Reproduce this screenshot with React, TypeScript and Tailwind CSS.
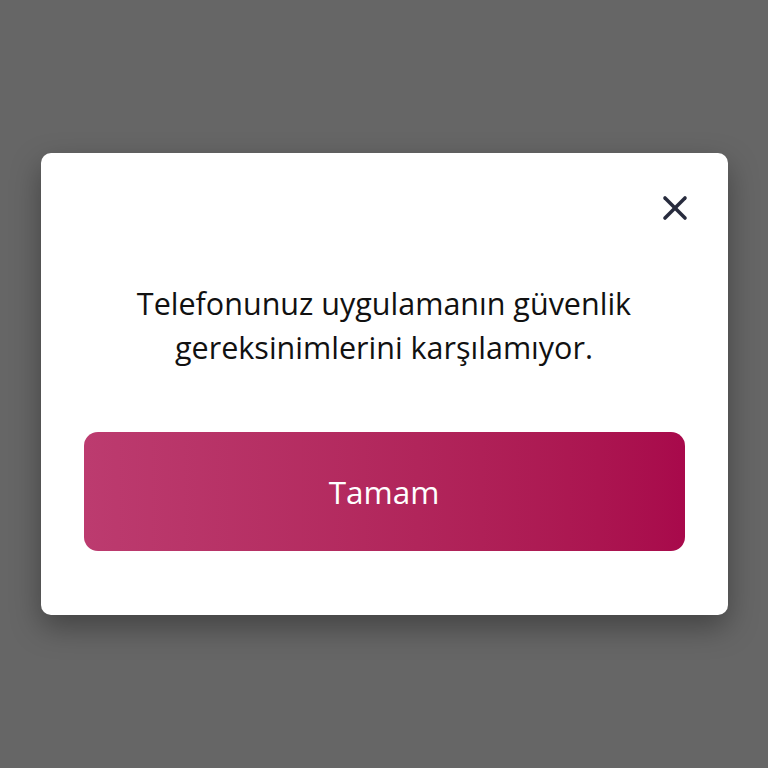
export default function App() {
  return (
    <div className="w-full h-[768px] bg-[#666666] flex items-center justify-center" style={{ fontFamily: '"Open Sans", "Noto Sans", sans-serif' }}>
      <div className="w-[687px] h-[462px] bg-white rounded-[10px] shadow-[0_12px_30px_rgba(0,0,0,0.35)] flex flex-col px-[43px] pt-[40px] pb-[64px]">
        <div className="flex justify-end mr-[-5px]">
          <button className="w-[30px] h-[30px] flex items-center justify-center text-[#272b3d]" aria-label="Kapat">
            <svg width="26" height="26" viewBox="0 0 26 26" fill="none" stroke="currentColor" strokeWidth="3.6" strokeLinecap="round">
              <line x1="3" y1="3" x2="23" y2="23" />
              <line x1="23" y1="3" x2="3" y2="23" />
            </svg>
          </button>
        </div>
        <p className="mt-[58px] text-center text-[30.5px] leading-[44px] text-[#111111]">
          Telefonunuz uygulamanın güvenlik
          <br />
          gereksinimlerini karşılamıyor.
        </p>
        <button className="mt-auto h-[119px] w-full rounded-[14px] bg-gradient-to-r from-[#bc3b6f] to-[#a8094b] text-white text-[31.5px]">
          Tamam
        </button>
      </div>
    </div>
  )
}
